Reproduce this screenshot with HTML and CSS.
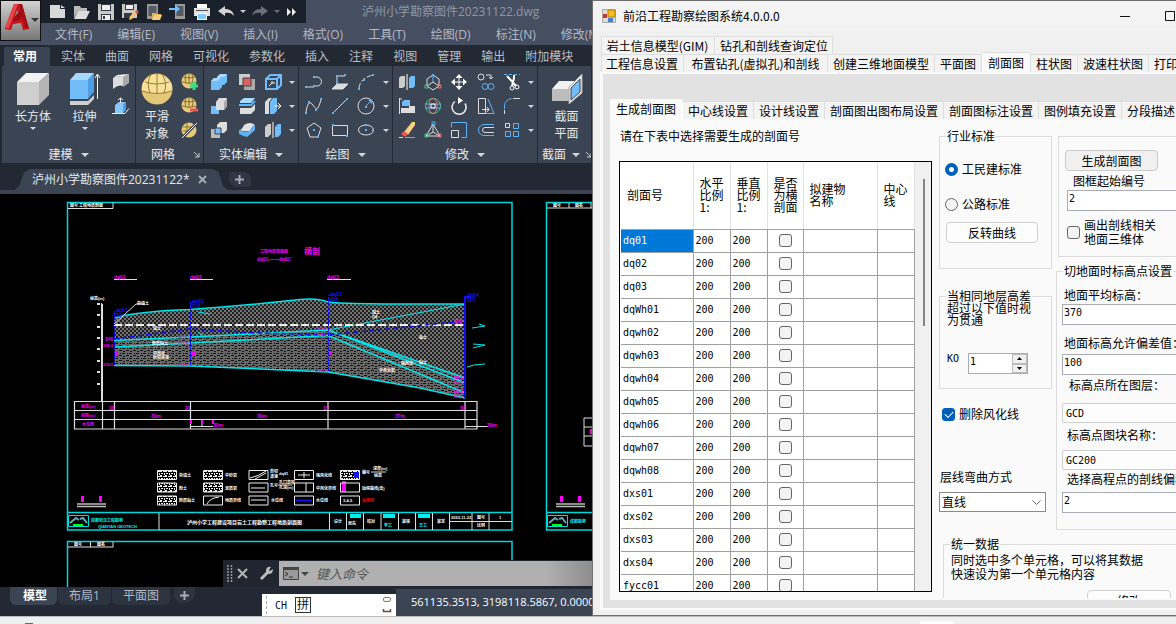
FILE: index.html
```html
<!DOCTYPE html>
<html lang="zh-CN">
<head>
<meta charset="utf-8">
<title>前沿工程勘察绘图系统4.0.0.0</title>
<link rel="stylesheet" href="styles.css">
</head>
<body>
<div class="desktop">
<main class="windows">

<section class="cad">
  <header class="cad-head">
    <button class="app-btn" aria-label="应用程序菜单">
      <svg width="39" height="39" viewBox="0 0 39 39"><path d="M4 27 13 3l8 0 7 25-6 1-2-7-8 1-2 6-6-1z" fill="#c4161c"/><path d="M13 3l4 0-9 24-4 0z" fill="#e8454a"/><path d="M16 9l-3 9 7-1z" fill="#8d8d8d"/><path d="M12 18l8-10 3 5-4 6-6 2z" fill="#9e0d13"/><path d="M21 3l7 25-4-1-6-24z" fill="#a20f15"/><path d="M30 17h8l-4 4z" fill="#333"/></svg>
    </button>
    <div class="head-rows">
      <div class="title-row">
        <div class="quick">
          <svg class="q" viewBox="0 0 18 18"><path d="M1 2h10v4h5v9H1z" fill="#d8d8d8"/><path d="M12 2l4 3h-4z" fill="#d8d8d8"/></svg>
          <svg class="q" viewBox="0 0 18 18"><path d="M1 15V3h6l1 2h6v3H5z" fill="#b9b9b9"/><path d="M5 8h12l-4 8H1z" fill="#dcdcdc"/></svg>
          <svg class="q" viewBox="0 0 18 18"><path d="M1 1h16v16H1z" fill="#c9c9c9"/><path d="M4 1h10v7H4zM4 11h10v6H4z" fill="#343b47"/><path d="M5 2h8v5H5zM5 12h8v5H5z" fill="#eee"/><path d="M6 13h2v3H6z" fill="#343b47"/></svg>
          <svg class="q" viewBox="0 0 18 18"><path d="M1 1h15v14H1z" fill="#c9c9c9"/><path d="M4 1h9v6H4zM3 10h8v5H3z" fill="#343b47"/><path d="M5 2h7v4H5z" fill="#eee"/><path d="M8 17l1-4 6-5 2 2-6 6z" fill="#f2c46d"/><path d="M14 9l2-2 2 2-2 2z" fill="#e24b4b"/></svg>
          <svg class="q" viewBox="0 0 18 18"><path d="M2 1h11v15H2z" fill="#9a9a9a"/><path d="M3.500 3h8v10h-8z" fill="#555b65"/><path d="M7 17v-7h4l1 1h4v1H9z" fill="#e4b24c"/><path d="M9 12h8l-2 5H7z" fill="#f6cf7a"/></svg>
          <svg class="q" viewBox="0 0 18 18"><path d="M6 1h10v15H6z" fill="#9a9a9a"/><path d="M7.500 3h7v10h-7z" fill="#555b65"/><path d="M0 5h6V2l5 4-5 4V7H0z" fill="#6cc1ff"/></svg>
          <svg class="q" viewBox="0 0 18 18"><path d="M4 1h10v4H4z" fill="#fff"/><path d="M1 5h16v8H1z" fill="#e0e0e0"/><path d="M3 7h12v1H3z" fill="#555"/><path d="M4 10h10v7H4z" fill="#fff"/><path d="M5 11h8v5H5z" fill="#7ccaff"/></svg>
          <svg class="q" viewBox="0 0 18 18"><path d="M1 8l7-5v3c5 0 8 2 9 7-2-3-5-4-9-3v3z" fill="#d4d4d4"/></svg>
          <svg class="dd" viewBox="0 0 8 5"><path d="M1 1h6L4 4z"/></svg>
          <svg class="q" viewBox="0 0 18 18"><path d="M17 8l-7-5v3c-5 0-8 2-9 7 2-3 5-4 9-3v3z" fill="#68707c"/></svg>
          <svg class="dd dim" viewBox="0 0 8 5"><path d="M1 1h6L4 4z"/></svg>
          <svg class="more" viewBox="0 0 10 8"><path d="M0 0l4 4-4 4zM5 0l4 4-4 4z" fill="#eee"/></svg>
        </div>
        <div class="file-title">泸州小学勘察图件20231122.dwg</div>
      </div>
      <nav class="menu"><span>文件(F)</span><span>编辑(E)</span><span>视图(V)</span><span>插入(I)</span><span>格式(O)</span><span>工具(T)</span><span>绘图(D)</span><span>标注(N)</span><span>修改(M)</span></nav>
    </div>
  </header>

  <nav class="rtabs"><button class="rtab on">常用</button><button class="rtab">实体</button><button class="rtab">曲面</button><button class="rtab">网格</button><button class="rtab">可视化</button><button class="rtab">参数化</button><button class="rtab">插入</button><button class="rtab">注释</button><button class="rtab">视图</button><button class="rtab">管理</button><button class="rtab">输出</button><button class="rtab">附加模块</button></nav>

  <div class="ribbon">
    <div class="panel">
      <div class="tools model">
        <button class="big"><svg width="34" height="34" viewBox="0 0 34 34"><path d="M1 10h22v23H1z" fill="#cfcfcf"/><path d="M1 10 10 1h23l-10 9z" fill="#f2f2f2"/><path d="M23 10 33 1v22L23 33z" fill="#b4b4b4"/></svg>长方体<i class="arr"></i></button>
        <button class="big"><svg width="34" height="34" viewBox="0 0 34 34"><path d="M2 29h18l6-6v4l-6 6H2z" fill="#cfcfcf"/><path d="M2 8h18v19H2z" fill="#72bdf9"/><path d="M2 8 8 1h18l-6 7z" fill="#a5d7ff"/><path d="M20 8l6-7v19l-6 7z" fill="#4a9fe6"/><path d="M29.500 27V3M27 6l2.500-4 2.500 4" stroke="#fff" fill="none"/></svg>拉伸<i class="arr"></i></button>
        <div class="stack"><svg class="i" viewBox="0 0 18 18"><path d="M1 5q5-3 10-1v9q-5-2-10 3z" fill="#ddd"/><path d="M1 5l4-3 12-1-6 3q-5-2-10 1z" fill="#f5f5f5"/><path d="M11 4l6-3v9l-6 4z" fill="#aaa"/></svg><svg class="i" viewBox="0 0 18 18"><path d="M3 8l4-3h7l-3 3v8H3z" fill="#85c8fb"/><path d="M11 8l3-3v8l-3 3z" fill="#4a9fe6"/><path d="M0 16.500h13l4-5M8.500 6V1M6 3l2.500-2L11 3" stroke="#eee" fill="none"/></svg></div>
      </div>
      <div class="ptitle">建模<i class="arr"></i></div>
    </div>
    <div class="panel">
      <div class="tools mesh">
        <button class="big"><svg width="34" height="34" viewBox="0 0 34 34"><circle cx="17" cy="17" r="15.500" fill="#e3c878"/><path d="M2 14a15.500 15.500 0 0 1 30 0v5q-15 5-30 0z" fill="#f7e19a"/><path d="M2 19q15 5 30 0M5 10q12 4 24 0M11 2Q6 11 10 21M22 2q6 9 2 19M17 1v21" fill="none" stroke="#9a7d35"/></svg>平滑<span>对象</span></button>
        <div class="stack">
          <svg class="i" viewBox="0 0 18 18"><circle cx="8" cy="8" r="7.500" fill="#e5cb7b"/><path d="M1 9q7 3 14 0M2 4q6 2 12 0M5 1q-2 5 0 9M11 1q2 5 0 9M8 0v10" stroke="#8a7033" fill="none"/><path d="M9 13h8M13 9v8" stroke="#3ddc84" stroke-width="3"/></svg>
          <svg class="i" viewBox="0 0 18 18"><circle cx="8" cy="8" r="7.500" fill="#e5cb7b"/><path d="M1 9q7 3 14 0M2 4q6 2 12 0M5 1q-2 5 0 9M11 1q2 5 0 9M8 0v10" stroke="#8a7033" fill="none"/><path d="M9 13h8" stroke="#f25555" stroke-width="3"/></svg>
          <svg class="i" viewBox="0 0 18 18"><circle cx="8" cy="9" r="7.500" fill="#e5cb7b"/><path d="M2 6h8M2 10h7M6 2v9" stroke="#8a7033" fill="none"/><path d="M1 17 16 2" stroke="#3b4453" stroke-width="3"/><path d="M1 17 16 2" stroke="#eee"/></svg>
        </div>
      </div>
      <div class="ptitle">网格<svg class="launch" viewBox="0 0 6 6"><path d="M0 0l5 5M5 1v4H1" stroke="#ccc" fill="none"/></svg></div>
    </div>
    <div class="panel">
      <div class="tools solid">
        <svg class="i" viewBox="0 0 18 18"><path d="M1 8l3-3h3V4l3-3h7v8l-3 3h-2v2l-3 3H1z" fill="#72bdf9"/><path d="M1 8l3-3h3V4l3-3h7l-3 3h-3l-3 4z" fill="#a8daff"/></svg>
        <svg class="i" viewBox="0 0 18 18"><path d="M1 1h11v11H1z" fill="#ccc"/><path d="M6 6h11v11H6z" fill="#aaa"/><path d="M5 5h8v8H5z" fill="#e06060" stroke="#3b4453"/></svg>
        <svg class="i" viewBox="0 0 18 18"><path d="M2 6h11v10H2zM2 6l4-4h11l-4 4M17 2v10l-4 4" fill="none" stroke="#72bdf9" stroke-width="2"/><path d="M5 13l3-3v-2M8 10h3" stroke="#fff" fill="none"/></svg><i class="arr"></i>
        <svg class="i" viewBox="0 0 18 18"><path d="M1 9h8v8H1z" fill="#72bdf9"/><path d="M6 5l3-4h8v8l-3 4H6z" fill="#ddd"/><path d="M14 5l3-4v8l-3 4z" fill="#aaa"/></svg>
        <svg class="i" viewBox="0 0 18 18"><path d="M2 4l4-3h11l-4 5H2z" fill="#a8daff"/><path d="M2 11h11l4-4v6l-4 4H2z" fill="#ddd"/><path d="M1 8h12l4-4" stroke="#5db3f7" stroke-width="2" fill="none"/></svg>
        <svg class="i" viewBox="0 0 18 18"><path d="M1 5l4-4h3L5 5v12H1z" fill="#ddd"/><path d="M6 5l3-4h4v13l-3 3H6z" fill="#72bdf9"/><path d="M11 9h6M14 6l3 3-3 3" stroke="#fff" fill="none"/></svg><i class="arr"></i>
        <svg class="i" viewBox="0 0 18 18"><path d="M1 8h9v9H1z" fill="#bbb"/><path d="M7 4l3-3h7v8l-3 3H7z" fill="#ddd"/><path d="M5 7h6v6H5z" fill="#72bdf9" stroke="#3b4453"/></svg>
        <svg class="i" viewBox="0 0 18 18"><path d="M1 9q3 0 5-5 6-4 11 0-3 1-5 6-5 1-11-1z" fill="#e2e2e2"/><path d="M1 9q6 3 11 1 2-5 5-6v5l-8 7q-4-1-8-3z" fill="#5db3f7"/></svg>
        <svg class="i" viewBox="0 0 18 18"><path d="M1 6l3-3h3v10l-3 3H1z" fill="#ccc"/><path d="M11 6l3-3h3v10l-3 3h-3z" fill="#72bdf9"/><path d="M9 1v16" stroke="#fff"/></svg><i class="arr"></i>
      </div>
      <div class="ptitle">实体编辑<i class="arr"></i></div>
    </div>
    <div class="panel">
      <div class="tools draw">
        <svg class="i ln" viewBox="0 0 18 18"><path d="M1 14h8M9 4h3a4.500 4.500 0 0 1 0 9H9"/><path class="p" d="M0 13h2v2H0zM8 3h2v2H8zM8 12h2v2H8z"/></svg>
        <svg class="i ln" viewBox="0 0 18 18"><path d="M6 10V3h8"/><path d="M1 16l5-5h11l-5 5z" fill="#ddd"/><path class="p" d="M5 2h2v2H5zM5 9h2v2H5zM13 1h2v2h-2z"/></svg>
        <svg class="i ln" viewBox="0 0 18 18"><path d="M2 15Q3 5 16 2" stroke-dasharray="5 2"/><path class="p" d="M1 15h2v2H1zM6 6h2v2H6zM15 1h2v2h-2z"/></svg><i class="arr"></i>
        <svg class="i ln" viewBox="0 0 18 18"><path d="M1 15Q3 2 7 7t5 5 4-9"/><path class="p" d="M0 15h2v2H0zM3 4h2v2H3zM10 12h2v2h-2zM15 1h2v2h-2z"/></svg>
        <svg class="i ln" viewBox="0 0 18 18"><path d="M2 16 16 2"/><path class="p" d="M1 15h2v2H1zM15 1h2v2h-2z"/></svg>
        <svg class="i ln" viewBox="0 0 18 18"><circle cx="9" cy="9" r="8"/><path d="M9 9l4-4" class="b"/><path class="p" d="M8 9h2v2H8zM11 3h4v4z"/></svg><i class="arr"></i>
        <svg class="i ln" viewBox="0 0 18 18"><path d="M9 2l7 5-3 9H5L2 7z"/><path class="p" d="M8 8h2v2H8zM12 15h2v2h-2z"/></svg>
        <svg class="i ln" viewBox="0 0 18 18"><path d="M1.500 4.500h15v10h-15z"/><path class="p" d="M1 3h2v2H1zM15 14h2v2h-2z"/></svg>
        <svg class="i ln" viewBox="0 0 18 18"><ellipse cx="9" cy="9" rx="7.500" ry="5"/><path class="p" d="M8 8h2v2H8zM8 3h2v2H8zM15 8h2v2h-2z"/></svg><i class="arr"></i>
      </div>
      <div class="ptitle">绘图<i class="arr"></i></div>
    </div>
    <div class="panel">
      <div class="tools modify">
        <svg class="i" viewBox="0 0 18 18"><path d="M1 5l2-2h4v10l-2 2H1z" fill="#ccc"/><path d="M11 5l2-2h4v10l-2 2h-4z" fill="#72bdf9"/><path d="M9 1v16" stroke="#fff"/></svg>
        <svg class="i ln" viewBox="0 0 18 18"><path d="M9 2l6 4v7l-6 4-6-4V6zM3 13l6-4 6 4"/><path class="b" d="M9 9V2M7 4l2-3 2 3"/><path d="M1 12h3v3H1z" stroke="#47c97b"/><path d="M14 12h3v3h-3z" stroke="#ee7777"/></svg>
        <svg class="i" viewBox="0 0 18 18"><path d="M9 2v14M2 9h14" stroke="#fff"/><path d="M5.500 5 9 1l3.500 4zM5.500 13 9 17l3.500-4zM5 5.500 1 9l4 3.500zM13 5.500 17 9l-4 3.500z" fill="#fff"/></svg>
        <svg class="i ln" viewBox="0 0 18 18"><circle cx="4" cy="4" r="3"/><path d="M9 2h5v4M12 4l2 2 2-2"/><circle class="b" cx="8" cy="13.500" r="3"/><circle class="b" cx="14" cy="13.500" r="3"/></svg>
        <svg class="i ln" viewBox="0 0 18 18"><path d="M1 1.500h16" class="b" stroke-dasharray="3 2"/><path d="M4 3l9 10M11 2v3L9 13" stroke="#fff" stroke-width="2"/><circle cx="9" cy="15" r="2" stroke="#fff"/><circle cx="14" cy="14" r="2" stroke="#fff"/></svg><i class="arr"></i>
        <svg class="i" viewBox="0 0 18 18"><path d="M1.500 1v16M1 2h3" stroke="#ddd"/><path d="M4 5l2-2h6v6H4z" fill="#72bdf9"/><path d="M3 11h8V9h6v7H3z" fill="#ddd"/></svg>
        <svg class="i ln" viewBox="0 0 18 18"><circle cx="9" cy="9" r="7.500" stroke="#47c97b"/><ellipse cx="9" cy="9" rx="4" ry="7.500" stroke="#ee7777"/><path class="b" d="M1 7h16M1 11h16"/><path d="M7 7h4v4H7z" stroke="#fff"/></svg>
        <svg class="i" viewBox="0 0 18 18"><path d="M5 4.500a7 7 0 1 0 10 2" stroke="#eee" stroke-width="1.500" fill="none"/><path d="M8 0l5 3.500L8 7z" fill="#fff"/></svg>
        <svg class="i ln" viewBox="0 0 18 18"><path d="M1.500 1.500h7v15h-7zM5 12.500h7M10 10l2 2.500-2 2.500"/><path class="b" d="M11 2l6 14.500H9"/></svg>
        <svg class="i ln" viewBox="0 0 18 18"><path class="b" d="M1.500 12V9q0-6 7-7.500"/><path d="M10 1.500h7M1.500 13v4"/></svg><i class="arr"></i>
        <svg class="i" viewBox="0 0 18 18"><path d="M6 11 14 1h3v3l-7 10z" fill="#f8cf7c"/><path d="M3 13l3-3 4 3-3 3z" fill="#f25555"/><path d="M1 16.500h4" stroke="#ddd"/><path d="M7 16.500h10" stroke="#5db3f7"/></svg>
        <svg class="i ln" viewBox="0 0 18 18"><path d="M9 3 2 15l7-4 7 4zM9 3v8M2 15h14"/><path class="b" d="M8 1h3v3H8z"/><path d="M1 13h3v3H1z" stroke="#47c97b"/><path d="M14 13h3v3h-3z" stroke="#ee7777"/></svg>
        <svg class="i ln" viewBox="0 0 18 18"><path class="b" d="M1.500 6.500v-5h15v15h-5"/><path d="M1.500 9.500h7v7h-7z"/></svg>
        <svg class="i ln" viewBox="0 0 18 18"><path class="b" d="M17 3.500H7a5.500 5.500 0 0 0 0 11h10"/><path d="M17 6.500H8a2.500 2.500 0 0 0 0 5h9"/></svg>
        <svg class="i ln" viewBox="0 0 18 18"><path d="M2.500 2.500h4v4h-4z"/><path class="b" d="M10.500 2.500h5v5h-5zM2.500 10.500h5v5h-5zM10.500 10.500h5v5h-5z"/></svg><i class="arr"></i>
      </div>
      <div class="ptitle">修改<i class="arr"></i></div>
    </div>
    <div class="panel last">
      <div class="tools section">
        <button class="big"><svg width="34" height="34" viewBox="0 0 34 34"><path d="M2 17h17v12H2z" fill="#bdbdbd"/><path d="M2 17l7-8h16l-6 8z" fill="#f2f2f2"/><path d="M19 15 32 2v19L19 32z" fill="#eee" stroke="#aaa"/><path d="M21 16l9-9v13l-9 8z" fill="#72bdf9" stroke="#3b4453"/></svg>截面<span>平面</span></button>
      </div>
      <div class="ptitle">截面<i class="arr"></i><svg class="launch" viewBox="0 0 6 6"><path d="M0 0l5 5M5 1v4H1" stroke="#ccc" fill="none"/></svg></div>
    </div>
  </div>

  <div class="doctabs">
    <div class="doctab">泸州小学勘察图件20231122*<button class="x" aria-label="关闭"><svg width="9" height="9" viewBox="0 0 9 9"><path d="M1 1l7 7M8 1 1 8" stroke="#a6acb6" stroke-width="2"/></svg></button></div>
    <button class="plus" aria-label="新建"><svg width="9" height="9" viewBox="0 0 9 9"><path d="M4.500 0v9M0 4.500h9" stroke="#a6acb6" stroke-width="2"/></svg></button>
  </div>

  <div class="stage">
    <svg class="sheet" viewBox="0 194 592 393" preserveAspectRatio="xMinYMin slice">
      <defs>
        <pattern id="h1" width="4" height="4" patternUnits="userSpaceOnUse"><rect width="4" height="4" fill="#727272"/><path d="M0 0h2v2H0zM2 2h2v2H2z" fill="#202020"/></pattern>
        <pattern id="h2" width="7" height="5" patternUnits="userSpaceOnUse"><rect width="7" height="5" fill="#686868"/><path d="M0 0h3v1H0zM4 1h2v1H4zM1 3h1v1H1zM3 3h3v1H3z" fill="#111"/></pattern>
        <pattern id="h3" width="5" height="5" patternUnits="userSpaceOnUse"><path d="M0 0h2v2H0zM3 1h2v1H3zM1 3h2v1H1zM4 3h1v2H4z" fill="#eee"/></pattern>
        <g id="logo" fill="none"><path d="M.5.500h20v11H.5z" stroke="#0dd"/><path d="M2 8l6-5 3 2M12 4l3-1 4 5" stroke="#6ab" stroke-width="2"/><path d="M5 10h10" stroke="#0f0" stroke-width="2"/></g>
        <g id="scale"><path d="M0 8h29M0 10.500h29" stroke="#bbb" stroke-width="1.500"/><path d="M4 0h3v6H4zM22 0h3v6h-3z" fill="#f0f"/></g>
      </defs>
      <g fill="none" stroke="#00d8dc" stroke-width="1.500">
        <path d="M67.500 202.500H512V530H67.500zM67.500 512.500H512M67.500 587V541.500H512V587M592 202.500H546.500V530H592M546.500 512.500H592"/>
      </g>
      <path fill="url(#h1)" d="M114 318 140 313 162 311 190 309.500 240 306 300 299.500 313 299 328 302 360 304.500 465 304V378L328 330 190 337 114 340.500z"/>
      <path fill="url(#h2)" d="M114 340.500 190 337 328 330 465 378V398L420 388 328 372 190 366 114 365.500z"/>
      <g fill="none" stroke="#00e5ea" stroke-width="1.500">
        <path d="M114 318Q140 311 190 309.500 240 306 300 299.500 318 298 328 302 345 304.500 465 304"/>
        <path d="M114 340.500 190 337 328 330 465 378M114 347 190 343 328 335.500 465 393M328 330 465 383M114 365.500 190 366 328 372 420 388 465 398"/>
        <path d="M328 330 465 304M198 312l12 2M198 332l5 3M472 328l13-2-6-2M473 348l12-3-12-1M467 367l7-2 11-1" stroke-width="1"/>
      </g>
      <path d="M114 325H465" stroke="#eee" stroke-width="2" stroke-dasharray="8 3" fill="none"/>
      <path d="M114 339 190 329 260 333 328 335 465 321" stroke="#1010f0" stroke-width="1.500" stroke-dasharray="5 3" fill="none"/>
      <path d="M114.500 365V311h6M190.500 365V302h5M328.500 371V295h6" stroke="#1111e8" stroke-dasharray="4 1" fill="none"/>
      <path d="M465 398V297h6" stroke="#1010ee" stroke-width="2" fill="none"/>
      <g fill="#1515f5" class="t5"><text x="116" y="312">dq01</text><text x="116" y="317">314</text><text x="192" y="303">dq02</text><text x="192" y="308">318</text><text x="330" y="296">dq03</text><text x="330" y="301">315</text><text x="467" y="297">dq04</text><text x="467" y="302">325</text></g>
      <g stroke="#ddd" fill="none">
        <path d="M102 304V401" stroke-width="2"/><path d="M97 304h5M97 315h5M97 327h5M97 338h5M97 349h5M97 361h5M97 372h5M97 384h5" stroke-width="2" stroke-dasharray="3 1"/>
        <path d="M114 324l22-20h9M114 279.500h23M190 279.500h23M327 279.500h24"/>
        <path d="M74.500 401.500H477V429H74.500zM74 410.500H477M74 419.500H477M114.500 401v28M190.500 401v28M328 401v28M465 401v28M102.500 401v28" stroke-width="1.200"/>
        <path d="M190 426.500h23M465 426.500h23M202 424v3"/>
        <path d="M68 208.500h45v-6M68 547h45v-5M90.500 542v5M547 208h45M569 203v5M591 203v5"/>
        <path d="M592 418h-8v28h8M584 427h8M584 436h8"/>
        <path d="M159 513v17M329.500 513v17M346.500 513v17M363.500 513v17M381 513v17M398.500 513v17M415.500 513v17M432.500 513v17M449.500 513v17M472 513v17M489 513v17M449.500 521.500H512"/>
      </g>
      <g fill="#f400f4" class="t4">
        <text x="260" y="253">工程地质剖面图</text>
        <text x="103" y="347">335.2</text><text x="103" y="366">319.5</text><text x="178" y="338">337.1</text><text x="178" y="344">333.4</text><text x="178" y="366">319.0</text><text x="316" y="330">342.8</text><text x="316" y="336">338.1</text><text x="316" y="372">316.4</text><text x="453" y="379">315.2</text><text x="453" y="384">310.3</text><text x="453" y="393">306.4</text><text x="453" y="398">301.1</text>
        <text x="81" y="408">标高(m)</text><text x="81" y="417">间距(m)</text><text x="82" y="426">水位线</text>
        <path d="M190 420h2v4h-2zM201 420h2v4h-2zM212 420h2v4h-2zM115 351h3v4h-3zM192 351h3v4h-3zM329 351h3v4h-3zM342 481h4v11h-4zM590 429h2v5h-2z"/>
      </g>
      <g fill="#f400f4" class="t5"><text x="257" y="261">dq01——dq01'</text><text x="114" y="279">dq01</text><text x="190" y="279">dq02</text><text x="327" y="279">dq03</text><text x="105" y="341">340</text><text x="454" y="323">345</text><text x="151" y="418">30m</text><text x="257" y="418">39m</text><text x="395" y="418">37m</text><text x="109" y="410">18</text><text x="185" y="410">21</text><text x="323" y="410">15</text><text x="460" y="410">30</text><text x="213" y="427">30m</text><text x="487" y="427">30m</text></g>
      <g fill="#f400f4" class="t8"><text x="304" y="254">横剖</text></g>
      <g fill="#fff" class="t4"><text x="90" y="300">标高(m)</text><text x="137" y="305">杂填土</text><text x="153" y="330">填土</text><text x="152" y="345">粉质黏土</text><text x="153" y="355">中风化</text><text x="153" y="359">砂岩夹泥</text><text x="372" y="314">填土</text><text x="372" y="318">Q4</text><text x="419" y="339">黏土</text><text x="401" y="365">强风化</text><text x="419" y="364">黏土</text><text x="379" y="372">中风化岩</text><text x="70" y="207">图号 工程地质剖面</text><text x="74" y="546">图号</text><text x="97" y="546">图名</text><text x="553" y="207">图号</text><text x="575" y="207">图名</text></g>
      <g fill="url(#h3)" stroke="#eee">
        <path d="M157.500 470.500h19v9h-19zM157.500 483h19v9h-19zM157.500 496h19v9h-19zM203.500 470.500h19v9h-19zM203.500 483h19v9h-19zM340.500 470.500h19v9h-19z"/>
        <path fill="none" d="M203.500 496h19v9h-19zM249 470.500h19v9h-19zM249 483h19v9h-19zM249 496h19v9h-19zM294.500 470.500h19v9h-19zM294.500 483h19v9h-19zM294.500 496h19v9h-19zM340.500 483h19v9h-19zM340.500 496h19v9h-19zM207 504q3-6 12-7M250 478q9-2 16-7M255 479l11-6M298 475h12M304 472v6M251 488h14M306 483v9M251 500h15"/>
      </g>
      <path d="M296 500.500h16" stroke="#11e" stroke-width="2"/><path d="M354 472h5v6h-5z" fill="#11e"/>
      <g fill="#fff" class="t4"><text x="179" y="477">杂填土</text><text x="179" y="490">粉土</text><text x="179" y="502">粉质黏土</text><text x="225" y="477">中砂岩</text><text x="225" y="490">泥质岩</text><text x="225" y="502">地质界线</text><text x="270" y="473">剪切</text><text x="270" y="478">波速</text><text x="279" y="475">dq01</text><text x="270" y="487">孔号</text><text x="279" y="484">孔口高程</text><text x="279" y="489">孔深(m)</text><text x="271" y="502">水位线</text><text x="316" y="477">强风化线</text><text x="316" y="490">中风化界线</text><text x="316" y="502">水位线</text><text x="362" y="474">编号</text><text x="373" y="470">深度(m)</text><text x="374" y="477">标高</text><text x="362" y="490">动探曲线(击)</text><text x="343" y="502">3-4-5</text><text fill="#f00" x="362" y="502">钻探线</text><text x="334" y="523">设计</text><text x="348" y="525">张先</text><text x="367" y="523">校对</text><text x="402" y="523">审核</text><text x="437" y="523">审定</text><text x="451" y="519">2023-11-22</text><text x="477" y="519">图号</text><text x="477" y="527">比例</text><text x="499" y="519">1</text></g>
      <g fill="#fff" class="t5"><text x="187" y="524">泸州小学工程建设项目岩土工程勘察工程地质剖面图</text></g>
      <path d="M371 472h15M278 485h14" stroke="#ddd"/>
      <path d="M350 514h11v4h-11zM383 514h12v4h-12zM418 514h12v4h-12z" fill="#0ee"/>
      <g fill="#0ee" class="t4"><text x="91" y="522">成都前沿工程勘察</text><text x="98" y="528">QIANYAN GEOTECH</text><text x="384" y="527">李工</text><text x="419" y="527">王工</text><text x="570" y="523">成都勘察</text></g>
      <use href="#logo" x="68" y="515"/><use href="#logo" x="547" y="515"/><use href="#scale" x="77" y="496"/><use href="#scale" x="556" y="496"/>
    </svg>
    <div class="cmd">
      <svg width="6" height="18" viewBox="0 0 6 18"><path d="M1 0v18M4.500 0v18" stroke="#999" stroke-width="1.500" stroke-dasharray="2 1"/></svg>
      <svg width="11" height="11" viewBox="0 0 11 11"><path d="M1 1l9 9M10 1l-9 9" stroke="#b5b5b5" stroke-width="2"/></svg>
      <svg class="wrench" width="15" height="15" viewBox="0 0 15 15"><path d="M2 13l7-7" stroke="#bbb" stroke-width="3"/><path d="M7 4q1-4 5-3l-2 3 1 1 3-2q0 5-4 5L7 7z" fill="#bbb"/></svg>
      <div class="cmd-in"><svg width="26" height="13" viewBox="0 0 26 13"><path d="M.5.500h15v12H.5z" fill="#999" stroke="#444"/><path d="M0 0h16v3H0z" fill="#444"/><path d="M2 5l3 2-3 2M6 10h4" stroke="#333" fill="none"/><path d="M18 5h8l-4 4z" fill="#444"/></svg><input type="text" placeholder="键入命令" aria-label="键入命令"></div>
    </div>
  </div>

  <footer class="cad-foot">
    <nav class="ltabs"><button class="ltab on">模型</button><button class="ltab">布局1</button><button class="ltab">平面图</button><button class="ltab add" aria-label="新建布局"><svg width="9" height="9" viewBox="0 0 9 9"><path d="M4.500 0v9M0 4.500h9" stroke="#a6acb6" stroke-width="2"/></svg></button></nav>
    <div class="ime"><i class="grip"></i><span class="ch">CH</span><span class="pin">拼</span><svg width="10" height="18" viewBox="0 0 10 18"><rect x="1.500" y="1.500" width="7" height="4" rx="1.500" fill="none" stroke="#8a7a6a"/><path d="M1.500 13v2.500h7V13" fill="none" stroke="#6a4a3a" stroke-width="1.500"/></svg></div>
    <div class="coords">561135.3513, 3198118.5867, 0.0000</div>
  </footer>
</section>

<section class="dlg">
  <header class="dlg-title">
    <svg width="14" height="14" viewBox="0 0 14 14"><path d="M.5.500h13v13H.5z" fill="#ddd" stroke="#aaa"/><path d="M6 1h7v7H6z" fill="#f5bd1f" stroke="#b98100"/><path d="M1 5h4v4H1z" fill="#c0392b"/><path d="M6 9h5v4H6z" fill="#3f7fe0"/></svg>
    <h1>前沿工程勘察绘图系统4.0.0.0</h1>
    <button aria-label="最小化"><svg width="10" height="10" viewBox="0 0 10 10"><path d="M0 5.500h10" stroke="#111"/></svg></button>
    <button aria-label="最大化"><svg width="10" height="10" viewBox="0 0 10 10"><path d="M.5.500h9v9h-9z" fill="none" stroke="#111"/></svg></button>
  </header>
  <nav class="tabs outer up"><button class="tab t-a">岩土信息模型(GIM)</button><button class="tab t-b">钻孔和剖线查询定位</button></nav>
  <nav class="tabs outer"><button class="tab">工程信息设置</button><button class="tab t-c">布置钻孔(虚拟孔)和剖线</button><button class="tab">创建三维地面模型</button><button class="tab">平面图</button><button class="tab sel">剖面图</button><button class="tab">柱状图</button><button class="tab">波速柱状图</button><button class="tab">打印</button></nav>
  <div class="page">
    <nav class="tabs inner"><button class="tab sel">生成剖面图</button><button class="tab">中心线设置</button><button class="tab">设计线设置</button><button class="tab">剖面图出图布局设置</button><button class="tab">剖面图标注设置</button><button class="tab">图例填充设置</button><button class="tab">分段描述</button></nav>
    <div class="sub">
      <div class="list">
        <p>请在下表中选择需要生成的剖面号</p>
        <div class="gridbox">
          <table>
            <colgroup><col class="c1"><col class="c2"><col class="c2"><col class="c4"><col class="c5"><col class="c2"></colgroup>
            <thead><tr><th>剖面号</th><th>水平<br>比例<br>1:</th><th>垂直<br>比例<br>1:</th><th>是否<br>为横<br>剖面</th><th>拟建物<br>名称</th><th>中心<br>线</th></tr></thead>
            <tbody>
            <tr><td class="cur">dq01</td><td>200</td><td>200</td><td><input type="checkbox" aria-label="dq01 横剖面"></td><td></td><td></td></tr>
            <tr><td>dq02</td><td>200</td><td>200</td><td><input type="checkbox" aria-label="dq02 横剖面"></td><td></td><td></td></tr>
            <tr><td>dq03</td><td>200</td><td>200</td><td><input type="checkbox" aria-label="dq03 横剖面"></td><td></td><td></td></tr>
            <tr><td>dqWh01</td><td>200</td><td>200</td><td><input type="checkbox" aria-label="dqWh01 横剖面"></td><td></td><td></td></tr>
            <tr><td>dqwh02</td><td>200</td><td>200</td><td><input type="checkbox" aria-label="dqwh02 横剖面"></td><td></td><td></td></tr>
            <tr><td>dqwh03</td><td>200</td><td>200</td><td><input type="checkbox" aria-label="dqwh03 横剖面"></td><td></td><td></td></tr>
            <tr><td>dqwh04</td><td>200</td><td>200</td><td><input type="checkbox" aria-label="dqwh04 横剖面"></td><td></td><td></td></tr>
            <tr><td>dqwh05</td><td>200</td><td>200</td><td><input type="checkbox" aria-label="dqwh05 横剖面"></td><td></td><td></td></tr>
            <tr><td>dqwh06</td><td>200</td><td>200</td><td><input type="checkbox" aria-label="dqwh06 横剖面"></td><td></td><td></td></tr>
            <tr><td>dqwh07</td><td>200</td><td>200</td><td><input type="checkbox" aria-label="dqwh07 横剖面"></td><td></td><td></td></tr>
            <tr><td>dqwh08</td><td>200</td><td>200</td><td><input type="checkbox" aria-label="dqwh08 横剖面"></td><td></td><td></td></tr>
            <tr><td>dxs01</td><td>200</td><td>200</td><td><input type="checkbox" aria-label="dxs01 横剖面"></td><td></td><td></td></tr>
            <tr><td>dxs02</td><td>200</td><td>200</td><td><input type="checkbox" aria-label="dxs02 横剖面"></td><td></td><td></td></tr>
            <tr><td>dxs03</td><td>200</td><td>200</td><td><input type="checkbox" aria-label="dxs03 横剖面"></td><td></td><td></td></tr>
            <tr><td>dxs04</td><td>200</td><td>200</td><td><input type="checkbox" aria-label="dxs04 横剖面"></td><td></td><td></td></tr>
            <tr><td>fycc01</td><td>200</td><td>200</td><td><input type="checkbox" aria-label="fycc01 横剖面"></td><td></td><td></td></tr>
            </tbody>
          </table>
          <div class="sbar"><i></i></div>
        </div>
      </div>
      <div class="opts">
        <div class="cols">
          <div class="col-a">
            <fieldset class="std"><legend>行业标准</legend>
              <label class="ck"><input type="radio" name="std" checked>工民建标准</label>
              <label class="ck"><input type="radio" name="std">公路标准</label>
              <button class="btn">反转曲线</button>
            </fieldset>
            <fieldset class="ko"><legend>当相同地层高差<br>超过以下值时视<br>为贯通</legend>
              <div class="ko-row"><label for="ko" class="mono">KO</label><span class="spin"><input id="ko" type="text" value="1"><span class="ud"><button aria-label="增加"><svg width="5" height="3" viewBox="0 0 5 3"><path d="M0 3h5L2.500 0z"/></svg></button><button aria-label="减少"><svg width="5" height="3" viewBox="0 0 5 3"><path d="M0 0h5L2.500 3z"/></svg></button></span></span></div>
            </fieldset>
            <label class="ck weather"><input type="checkbox" checked>删除风化线</label>
            <label class="bend" for="bend">层线弯曲方式</label>
            <div class="selwrap"><select id="bend"><option>直线</option></select><svg width="9" height="5" viewBox="0 0 9 5"><path d="M.5.500l4 4 4-4" fill="none" stroke="#666"/></svg></div>
          </div>
          <div class="col-b">
            <fieldset class="gen"><legend></legend>
              <button class="btn">生成剖面图</button>
              <label for="n1" class="l1">图框起始编号</label><input id="n1" class="tx" type="text" value="2">
              <label class="ck two"><input type="checkbox"><span>画出剖线相关<br>地面三维体</span></label>
            </fieldset>
            <fieldset class="elev"><legend>切地面时标高点设置</legend>
              <label for="e1">地面平均标高：</label><input id="e1" class="tx" type="text" value="370">
              <label for="e2" class="l2">地面标高允许偏差值：</label><input id="e2" class="tx" type="text" value="100">
              <label for="e3" class="l3">标高点所在图层：</label><select id="e3" class="cb"><option>GCD</option></select>
              <label for="e4" class="l4">标高点图块名称：</label><select id="e4" class="cb"><option>GC200</option></select>
              <label for="e5" class="l5">选择高程点的剖线偏移</label><input id="e5" class="tx" type="text" value="2">
            </fieldset>
          </div>
        </div>
        <fieldset class="uni"><legend>统一数据</legend>
          <p>同时选中多个单元格，可以将其数据<br>快速设为第一个单元格内容</p>
          <button class="btn">修改</button>
        </fieldset>
      </div>
    </div>
  </div>
</section>
</main>
<footer class="strip"><i class="dot"></i><i class="pill"></i></footer>
</div>
</body>
</html>
```
FILE: styles.css
```css
*{box-sizing:border-box}
body{margin:0;font:12px/16px "Open Sans","Noto Sans CJK SC",sans-serif;overflow:hidden}
button,input,select{font:inherit;color:inherit;margin:0;padding:0;border:0;background:none}
p,h1{margin:0;font:inherit}
svg{display:block;flex:none}
.desktop{display:flex;flex-direction:column;height:100vh}
.windows{flex:1;min-height:0;display:grid;grid-template-columns:minmax(0,592fr) minmax(0,584fr)}
.strip{height:8px;background:#f0f0f0;border-top:1px solid #bbb;display:flex;justify-content:space-between;align-items:flex-end}
.dot{width:8px;height:1px;margin-left:25px;background:#b04a4a}
.pill{width:34px;height:3px;margin-right:222px;background:#fff;border-radius:4px 4px 0 0}

/* CAD window */
.cad{display:flex;flex-direction:column;min-width:0;overflow:hidden;background:#222933;color:#e6e8ec}
.cad button{white-space:nowrap}
.cad-head{display:flex;height:45px;background:#464f62}
.app-btn{width:41px;height:41px;border:1px solid #111;background:linear-gradient(#d2d2d2,#777)}
.head-rows{flex:1;min-width:0}
.title-row{display:flex;height:23px;align-items:center}
.quick{display:flex;align-items:center;gap:6px;height:23px;padding:0 6px 0 8px;background:#1b212b;width:265px}
.quick .dd{margin:0 -2px}
.q{width:18px;height:18px}
.dd{width:8px;height:5px;fill:#ccc}
.dd.dim{fill:#68707c}
.more{width:10px;height:8px;margin-left:2px}
.file-title{margin-left:56px;color:#9097a4;white-space:nowrap}
.menu{display:flex;gap:25px;padding:4px 0 0 14px;color:#b4b9c3;white-space:nowrap;overflow:hidden}
.rtabs{display:flex;height:21px;padding:2px 0 0 4px;color:#b9bec6}
.rtab{padding:0 10px;height:19px;line-height:19px}
.rtab.on{padding:0 13px 0 9px;margin-right:1px;background:#3b4453;color:#fff;font-weight:bold;border-radius:2px 2px 0 0}
.ribbon{display:flex;height:97px;padding-left:2px}
.panel{display:flex;flex-direction:column;justify-content:space-between;background:#3b4453;border-right:1px solid #222933;flex:none;overflow:hidden}
.panel.last{flex:1;min-width:0}
.tools{display:grid;padding:4px 0 0 1px;grid-auto-rows:24px;align-items:center;justify-items:center}
.model{grid-template-columns:60px 43px 29px;align-items:start;grid-auto-rows:auto}
.mesh{grid-template-columns:40px 26px;align-items:start;grid-auto-rows:auto}
.solid{grid-template-columns:28px 27px 25px 13px}
.draw{grid-template-columns:28px 24px 28px 12px}
.modify{grid-template-columns:26px 26px 26px 28px 24px 13px}
.section{grid-auto-rows:auto;padding-left:4px}
.big{display:flex;flex-direction:column;align-items:center;padding-top:2px;line-height:17px}
.big svg{margin-bottom:2px}
.big .arr{margin-top:2px}
.stack{display:grid;grid-auto-rows:24px;align-items:center}
.i{width:18px;height:18px}
.arr{flex:none;border:3px solid transparent;border-top:3px solid #d5d5d5;border-bottom:0}
.ptitle{display:flex;align-items:center;justify-content:center;gap:8px;height:17px;white-space:nowrap}
.ptitle .arr{border-width:4px 4px 0}
.last .ptitle{justify-content:flex-start;gap:6px;padding-left:4px}
.launch{width:6px;height:6px}
.mesh + .ptitle{gap:19px;padding-left:12px}
.ln{fill:none;stroke:#ddd}
.ln .b{stroke:#5db3f7}
.ln .p{fill:#5db3f7;stroke:none}
.doctabs{display:flex;height:31px;padding:6px 0 0 14px;border-bottom:4px solid #3b4453;align-items:flex-end}
.doctab{display:flex;align-items:center;gap:8px;height:21px;padding:0 22px 0 18px;background:#3b4453;white-space:nowrap;clip-path:polygon(0 100%,5px 85%,10px 15%,16px 0,calc(100% - 16px) 0,calc(100% - 10px) 15%,calc(100% - 5px) 85%,100% 100%)}
.plus{display:grid;place-items:center;width:22px;height:15px;margin:0 0 3px;background:#2f3744;border-radius:2px 8px 2px 8px}
.stage{position:relative;flex:1;min-height:0;background:#000;overflow:hidden}
.sheet{width:100%;height:100%}
.sheet text{font-family:"Liberation Sans","Noto Sans CJK SC",sans-serif;font-weight:bold}
.t4{font-size:4px}
.t5{font-size:5px}
.t8{font-size:8px}
.cmd{position:absolute;left:223px;right:0;bottom:0;height:27px;display:flex;align-items:center;background:#20252f;padding-left:4px;gap:4px}
.wrench{margin-left:7px}
.cmd-in{display:flex;align-items:center;flex:1;min-width:0;height:25px;margin-left:1px;padding-left:4px;gap:7px;background:linear-gradient(90deg,#b0b0b0 85%,#8d8d8d)}
.cmd-in input{flex:1;min-width:0;font-style:italic;font-size:13px}
.cmd-in input::placeholder{color:#555;opacity:1}
.cad-foot{display:flex;height:29px;align-items:flex-end}
.ltabs{display:flex;align-self:flex-start;width:262px;padding-left:10px;gap:1px;color:#b4b9c3}
.ltab{height:18px;padding:0 11px;background:#2c3440;border-radius:0 0 6px 6px}
.ltab.on{background:#3b4453;color:#fff;font-weight:bold;padding:0 10px 0 13px}
.ltab.add{display:grid;place-items:center;padding:0 6px;height:16px;margin-left:3px;border-radius:0 0 10px 8px}
.ime{display:flex;align-items:center;width:134px;height:22px;background:#fff;color:#111;padding:0 4px}
.grip{height:18px;border-left:1px dashed #aaa;margin-right:8px}
.ch{font:10px "DejaVu Sans Mono",monospace}
.pin{margin:0 auto 0 8px;border:1px solid #333;width:16px;height:16px;line-height:14px;text-align:center}
.coords{flex:1;min-width:0;height:27px;line-height:26px;padding-left:15px;background:#3b4453;font-size:11px;white-space:nowrap;overflow:hidden;color:#fff}

/* Dialog window */
.dlg{display:flex;flex-direction:column;min-width:0;overflow:hidden;background:#f0f0f0;border:solid #6f6f6f;border-width:1px 0 1px 1px;color:#000;line-height:12px;white-space:nowrap;font-family:"Noto Sans CJK SC",sans-serif}
.dlg-title{display:flex;align-items:center;height:30px;padding:0 1px 0 9px;background:#f3f3f3;gap:7px}
.dlg-title h1{flex:1}
.dlg-title button + button{margin-left:28px}
.tabs{display:flex;align-items:flex-end;flex:none}
.tab{flex:none;height:18px;padding:0 5px;background:#f3f3f3;border:1px solid #dedede;border-width:1px 1px 0 0;line-height:16px}
.outer{height:18px;padding-left:8px}
.outer.up{margin-top:5px}
.outer .tab:first-child{padding-left:4px;border-left-width:1px}
.t-a{width:114px}
.t-b{width:118px}
.t-c{width:144px}
.tab.sel{background:#fafafa;height:20px}
.outer .sel{padding:0 6px}
.page{flex:1;min-height:0;display:flex;flex-direction:column;margin:0 0 5px 7px;padding:25px 0 8px 3px;background:#e2e2e2;border:solid #fafafa;border-width:2px 0 2px 3px}
.inner{height:20px;padding-left:4px}
.inner .sel{padding:0 7px 0 6px;border:0}
.sub{flex:1;min-height:0;display:grid;grid-template-columns:minmax(313px,1fr) 257px;column-gap:7px;margin-left:4px;padding:11px 0 0 9px;background:#fafafa;margin-right:-20px;overflow:hidden}
.list{display:flex;flex-direction:column;min-height:0;padding-bottom:8px}
.list p{margin:0 0 19px 1px}
.gridbox{flex:1;min-height:0;display:flex;border:1px solid #000;padding:0 0 0 1px;overflow:hidden;background:#fff}
table{border-collapse:collapse;table-layout:fixed;width:293px;flex:1;align-self:flex-start}
.c1{width:72px}.c2{width:37px}.c4{width:36px}.c5{width:74px}
th{height:67px;padding:0 0 0 6px;text-align:left;font-weight:normal;border-right:1px solid #e2e2e2;border-bottom:1px solid #a0a0a0}
td{height:23px;padding:0 0 0 2px;border:1px solid #a0a0a0;border-top:0;font:10px/12px "DejaVu Sans Mono",monospace}
td:first-child{border-left:0}
td:nth-child(4){padding:0}
td input{display:block;margin:0 auto}
.cur{background:#0078d7;color:#fff}
.sbar{width:17px;background:#f0f0f0;padding:17px 0 0 8px}
.sbar i{display:block;width:2px;height:147px;background:#858585}
input[type=checkbox],input[type=radio]{appearance:none;flex:none;width:13px;height:13px;border:1px solid #666;border-radius:3px;background:#f3f3f3}
input[type=radio]{border-radius:50%}
input[type=radio]:checked{border:4px solid #005fb8;background:#fff}
input[type=checkbox]:checked{border-color:#005fb8;background:#005fb8;display:grid;place-items:center}
input[type=checkbox]:checked::after{content:"";width:7px;height:4px;margin-bottom:2px;border:solid #fff;border-width:0 0 1px 1px;transform:rotate(-45deg)}
.opts{min-width:0;overflow:hidden;margin-bottom:2px}
.cols{display:grid;grid-template-columns:113px 1fr;column-gap:4px}
fieldset{margin:0;padding:0;border:1px solid #dcdcdc;min-width:0}
legend{height:12px;margin-left:0;padding:0 1px}
.ck{display:flex;align-items:center;gap:4px;height:14px}
.btn{display:block;height:21px;border:1px solid #d0d0d0;border-radius:4px;background:#fdfdfd;text-align:center;line-height:17px}
.std{padding:20px 5px 25px}
.std legend{margin-left:1px}
.std .ck + .ck{margin-top:21px}
.std .btn{width:92px;margin:11px 0 0 1px}
.ko{margin-top:21px;padding:51px 7px 14px}
.ko legend{margin-left:-1px}
.mono{font:10px "DejaVu Sans Mono",monospace}
.ko-row{display:flex;justify-content:space-between;padding-right:16px}
.spin{display:flex;width:60px;height:21px;border:1px solid #ababb3;background:#fff;font:10px/16px "DejaVu Sans Mono",monospace}
.spin input{flex:1;min-width:0;padding:0 1px 3px}
.ud{display:grid;width:15px;grid-template-rows:1fr 1fr}
.ud button{display:grid;place-items:center;background:#f0f0f0;border:1px solid #bbb}
.weather{margin:18px 0 0 3px}
.bend{display:block;margin:50px 0 9px 1px}
.selwrap{display:grid;width:107px;align-items:center}
.selwrap > *{grid-area:1/1}
.selwrap svg{justify-self:end;margin-right:5px;pointer-events:none}
select{appearance:none}
.selwrap select{width:100%;height:20px;border:1px solid #8a8a8a;padding-left:2px;background:#fff}
.gen{margin-left:2px;padding:8px 0 10px 6px}
.gen legend{padding:0;margin:0}
.gen .btn{width:93px;background:#f0f0f0;border:1px solid #ccc}
.gen label,.elev label{display:block}
.gen .l1{margin:4px 0 3px 8px}
.gen .two{display:flex;margin:7px 0 0;height:28px;line-height:14px}
.tx{display:block;width:100%;height:21px;border:1px solid #ababb3;background:#fff;padding:0 1px 4px;font:10px "DejaVu Sans Mono",monospace}
.gen .tx{margin-left:2px}
.gen .two{padding-left:2px}
.elev{margin-top:8px;padding:12px 0 16px 5px}
.elev legend{margin-left:1px}
.elev label{margin:0 0 3px 2px}
.elev .l2{margin:12px 0 5px 2px}
.elev .l3{margin:4px 0 12px 7px}
.elev .l4{margin:6px 0 9px 5px}
.elev .l5{margin:3px 0 7px 5px}
.cb{display:block;width:100%;height:20px;border:1px solid #d0d0d0;border-radius:2px;background:#fdfdfd;padding-left:3px;font:10px "DejaVu Sans Mono",monospace}
.uni{margin:8px 0 0 4px;padding:3px 7px;height:80px}
.uni legend{margin-left:-1px}
.uni p{line-height:14px}
.uni .btn{width:84px;margin:9px 0 0 136px}
```
